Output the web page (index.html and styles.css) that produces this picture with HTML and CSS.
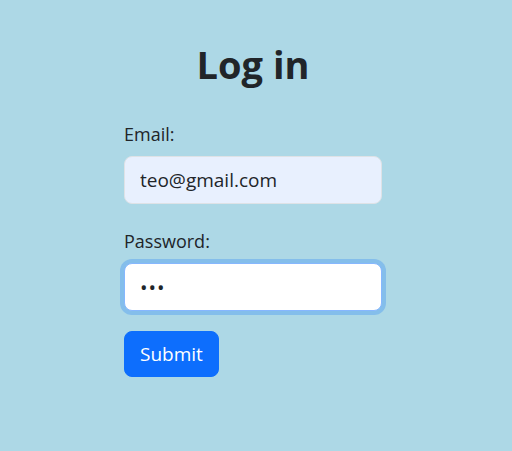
FILE: index.html
```html
<!DOCTYPE html>
<html lang="en">
<head>
<meta charset="utf-8">
<title>Log in</title>
<link rel="stylesheet" href="styles.css">
</head>
<body>
<main class="page">
  <h1 class="title">Log in</h1>
  <form class="login-form">
    <div class="field">
      <label class="field-label" for="email">Email:</label>
      <input class="field-input field-input--autofill" id="email" type="email" value="teo@gmail.com">
    </div>
    <div class="field">
      <label class="field-label" for="password">Password:</label>
      <input class="field-input field-input--focus" id="password" type="password" value="abc">
    </div>
    <button class="submit-btn" type="submit">Submit</button>
  </form>
</main>
</body>
</html>
```
FILE: styles.css
```css
* { box-sizing: border-box; }
html, body { margin: 0; }
body {
  background: #add8e6;
  color: #212529;
  font-family: "Open Sans", "Noto Sans", sans-serif;
  font-size: 16px;
  min-height: 451px;
}
.page {
  width: 258px;
  margin-left: 124px;
  padding-top: 40px;
}
.title {
  margin: 0 0 33px;
  font-size: 38px;
  font-weight: 700;
  line-height: 48px;
  text-align: center;
}
.login-form {
  display: flex;
  flex-direction: column;
  align-items: flex-start;
}
.field {
  width: 100%;
  display: flex;
  flex-direction: column;
  margin-bottom: 20px;
}
.field + .field {
  margin-top: 4px;
}
.field-label {
  font-size: 18px;
  line-height: 27px;
  margin-bottom: 8px;
}
.field-input {
  width: 258px;
  height: 48px;
  padding: 8px 15px;
  font-family: inherit;
  font-size: 19px;
  color: #212529;
  background: #fff;
  border: 1px solid #dee2e6;
  border-radius: 8px;
  outline: none;
}
.field-input--autofill {
  background: #e8f0fe;
}
.field-input--focus {
  border-color: #86b7fe;
  box-shadow: 0 0 0 4px rgba(13, 110, 253, 0.25);
  font-size: 20px;
  letter-spacing: 1px;
}
.submit-btn {
  height: 46px;
  padding: 0 15px;
  font-family: inherit;
  font-size: 19px;
  color: #fff;
  background: #0d6efd;
  border: 1px solid #0d6efd;
  border-radius: 8px;
  cursor: pointer;
}
```
